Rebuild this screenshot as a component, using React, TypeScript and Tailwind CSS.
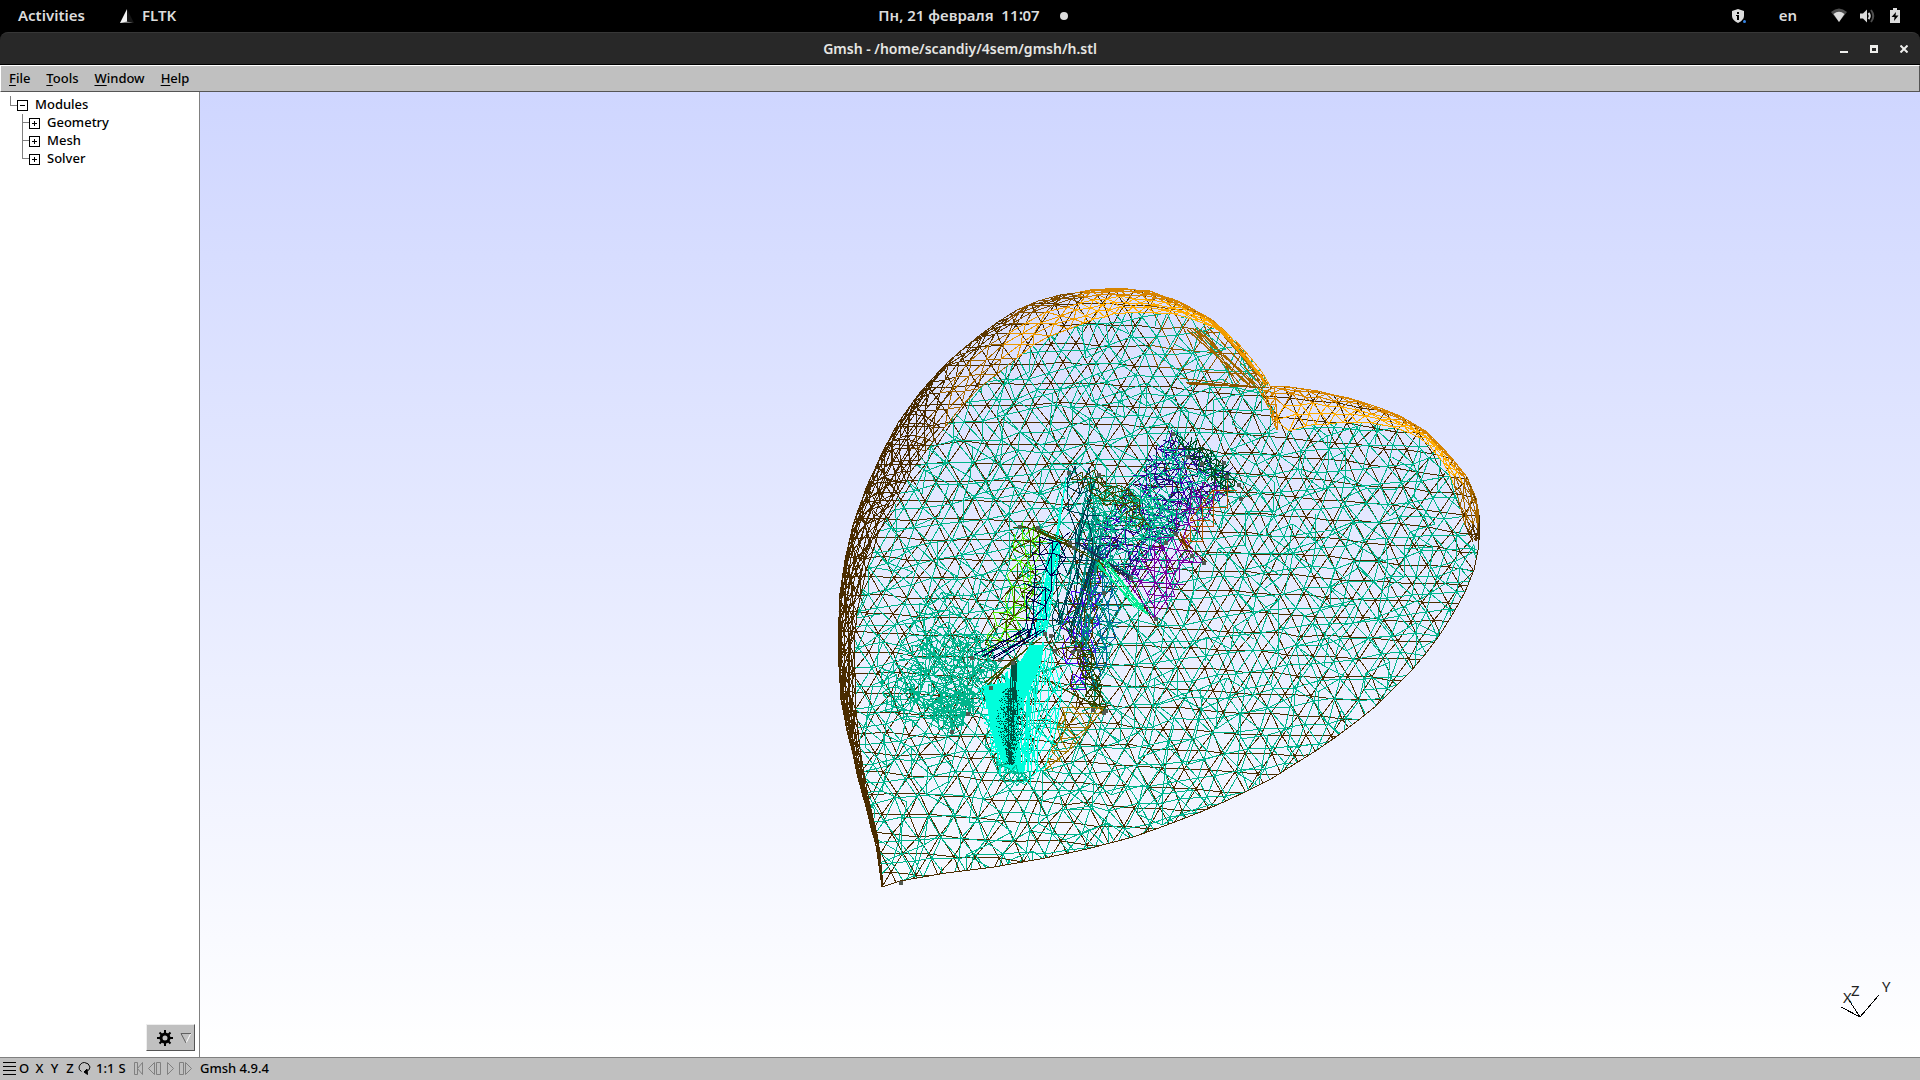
import React from "react";

type Pt = [number, number];
type Stroke = { color: string; d: string };

const random = (seed: number) => {
  let s = seed * 2654435761;
  return () => {
    s = (s + 0x6d2b79f5) | 0;
    let t = Math.imul(s ^ (s >>> 15), 1 | s);
    t = (t + Math.imul(t ^ (t >>> 7), 61 | t)) ^ t;
    return ((t ^ (t >>> 14)) >>> 0) / 4294967296;
  };
};

const inside = (poly: Pt[], x: number, y: number) => {
  let hit = false;
  for (let i = 0, j = poly.length - 1; i < poly.length; j = i++) {
    const [xi, yi] = poly[i];
    const [xj, yj] = poly[j];
    if (yi > y !== yj > y && x < ((xj - xi) * (y - yi)) / (yj - yi) + xi) hit = !hit;
  }
  return hit;
};

const points = (poly: Pt[]) => poly.map((p) => p.join(",")).join(" ");
const seg = (a: Pt, b: Pt) =>
  `M${Math.round(a[0])} ${Math.round(a[1])}L${Math.round(b[0])} ${Math.round(b[1])}`;

type LatticeOptions = {
  dx: number;
  dy: number;
  angle?: number;
  jitter?: number;
  seed?: number;
  density?: number;
  margin?: boolean;
  warp?: (x: number, y: number) => Pt;
  paint?: (x: number, y: number) => string;
};

/* Triangulated lattice over a polygon, grouped by stroke colour. */
const lattice = (poly: Pt[], color: string, o: LatticeOptions): Stroke[] => {
  const rnd = random(o.seed ?? 1);
  const xs = poly.map((p) => p[0]);
  const ys = poly.map((p) => p[1]);
  const cx = (Math.min(...xs) + Math.max(...xs)) / 2;
  const cy = (Math.min(...ys) + Math.max(...ys)) / 2;
  const r = Math.hypot(Math.max(...xs) - cx, Math.max(...ys) - cy) + 50;
  const a = ((o.angle ?? 0) * Math.PI) / 180;
  const jit = o.jitter ?? 2;
  const n = Math.ceil(r / o.dx);
  const m = Math.ceil(r / o.dy);
  const grid: Pt[][] = [];
  for (let j = -m; j <= m; j++) {
    const row: Pt[] = [];
    for (let i = -n; i <= n; i++) {
      const u = (i + (j & 1) / 2) * o.dx + (rnd() - 0.5) * jit * 2;
      const v = j * o.dy + (rnd() - 0.5) * jit * 2;
      let p: Pt = [cx + u * Math.cos(a) - v * Math.sin(a), cy + u * Math.sin(a) + v * Math.cos(a)];
      if (o.warp) p = o.warp(p[0], p[1]);
      row.push(p);
    }
    grid.push(row);
  }
  const groups: Record<string, string[]> = {};
  const add = (p: Pt, q?: Pt) => {
    if (!q) return;
    if (o.density !== undefined && rnd() > o.density) return;
    const mx = (p[0] + q[0]) / 2;
    const my = (p[1] + q[1]) / 2;
    const hit = o.margin ? inside(poly, p[0], p[1]) || inside(poly, q[0], q[1]) : inside(poly, mx, my);
    if (!hit) return;
    (groups[o.paint ? o.paint(mx, my) : color] ??= []).push(seg(p, q));
  };
  grid.forEach((row, j) => {
    const odd = (j - m) & 1;
    const next = grid[j + 1];
    row.forEach((p, i) => {
      add(p, row[i + 1]);
      if (next) {
        add(p, next[i + (odd ? 0 : -1)]);
        add(p, next[i + (odd ? 1 : 0)]);
      }
    });
  });
  return Object.entries(groups).map(([c, d]) => ({ color: c, d: d.join("") }));
};

/* Long thin strokes from one polyline to another, for stretched triangles. */
const fan = (from: Pt[], to: Pt[], color: string, count: number, seed: number): Stroke => {
  const rnd = random(seed);
  const at = (line: Pt[], t: number): Pt => {
    const f = t * (line.length - 1);
    const i = Math.min(line.length - 2, Math.floor(f));
    const k = f - i;
    return [line[i][0] + (line[i + 1][0] - line[i][0]) * k, line[i][1] + (line[i + 1][1] - line[i][1]) * k];
  };
  let d = "";
  for (let i = 0; i < count; i++) {
    const t = rnd();
    d += seg(at(from, t), at(to, Math.min(1, Math.max(0, t + (rnd() - 0.5) * 0.5))));
  }
  return { color, d };
};

/* Foreshortened surface between an outer silhouette and an inner curve. */
const band = (
  outer: Pt[],
  inner: Pt[],
  rows: number,
  step: number,
  seed: number,
  paint: (x: number, y: number, k: number) => string
): Stroke[] => {
  const rnd = random(seed);
  const groups: Record<string, string[]> = {};
  const rings: Pt[][] = Array.from({ length: rows + 1 }, () => []);
  for (let s = 0; s < outer.length - 1; s++) {
    const len = Math.hypot(outer[s + 1][0] - outer[s][0], outer[s + 1][1] - outer[s][1]);
    const n = Math.max(1, Math.round(len / step));
    for (let q = 0; q < n; q++) {
      for (let k = 0; k <= rows; k++) {
        const t = Math.min(1, (q + (k % 2) / 2) / n);
        const w = 1 - Math.cos(((k / rows) * Math.PI) / 2);
        const g = Math.min(1, Math.max(0, w + (k ? (rnd() - 0.5) * 0.08 : 0)));
        const ox = outer[s][0] + (outer[s + 1][0] - outer[s][0]) * t;
        const oy = outer[s][1] + (outer[s + 1][1] - outer[s][1]) * t;
        const ix = inner[s][0] + (inner[s + 1][0] - inner[s][0]) * t;
        const iy = inner[s][1] + (inner[s + 1][1] - inner[s][1]) * t;
        rings[k].push([ox + (ix - ox) * g, oy + (iy - oy) * g]);
      }
    }
  }
  const add = (p: Pt | undefined, q: Pt | undefined, k: number) => {
    if (!p || !q) return;
    (groups[paint((p[0] + q[0]) / 2, (p[1] + q[1]) / 2, k)] ??= []).push(seg(p, q));
  };
  rings.forEach((ring, k) =>
    ring.forEach((p, i) => {
      add(p, ring[i + 1], k);
      if (k < rows) {
        add(p, rings[k + 1][i], k);
        add(p, rings[k + 1][i + (k % 2 ? 1 : -1)], k);
      }
    })
  );
  return Object.entries(groups).map(([c, d]) => ({ color: c, d: d.join("") }));
};

const leftOuter: Pt[] = [
  [882, 887], [876, 845], [862, 793], [848, 735], [841, 700], [838, 650], [839, 600], [845, 560],
  [853, 525], [866, 488], [882, 453], [898, 423], [918, 395], [932, 379], [947, 363], [963, 349],
  [980, 335], [998, 322], [1017, 310], [1038, 301], [1060, 295], [1090, 290], [1120, 288],
  [1150, 291], [1180, 302], [1211, 319], [1235, 340],
];
const leftInner: Pt[] = [
  [883, 886], [879, 842], [867, 793], [859, 740], [855, 700], [854, 645], [858, 605], [870, 560],
  [882, 525], [898, 497], [909, 477], [922, 455], [937, 437], [952, 417], [970, 398], [987, 382],
  [1006, 365], [1027, 350], [1040, 342], [1060, 332], [1078, 325], [1100, 318], [1120, 313],
  [1145, 312], [1183, 315], [1220, 330], [1236, 341],
];
const lobe: Pt[] = [[1250, 357], [1262, 372], [1270, 386]];
const rightOuter: Pt[] = [
  [1270, 386], [1290, 387], [1318, 391], [1349, 398], [1380, 408], [1400, 416], [1427, 432],
  [1450, 456], [1467, 477], [1476, 498], [1479, 515], [1480, 530], [1478, 550],
];
const rightInner: Pt[] = [
  [1278, 435], [1300, 427], [1322, 424], [1350, 422], [1380, 424], [1405, 430], [1425, 440],
  [1440, 458], [1450, 475], [1458, 495], [1461, 515], [1468, 535], [1477, 550],
];
const lower: Pt[] = [
  [1474, 570], [1465, 592], [1454, 612], [1441, 633], [1427, 652], [1411, 671], [1394, 688],
  [1376, 706], [1356, 722], [1336, 737], [1314, 752], [1293, 765], [1271, 779], [1249, 790],
  [1226, 801], [1203, 811], [1180, 820], [1156, 829], [1133, 837], [1110, 843], [1087, 849],
  [1064, 854], [1040, 859], [1017, 863], [994, 867], [970, 870], [946, 873], [923, 877], [900, 881],
];

const heart: Pt[] = [...leftOuter, ...lobe, ...rightOuter, ...lower];
const front: Pt[] = [...leftInner, ...lobe, [1274, 410], ...rightInner, ...lower];

const BROWN = "#4a2c00";
const TEAL = "#00b58c";
const CYAN = "#00ffdc";

const leftPaint = (x: number, y: number, k: number) => {
  if (x < 945) return k > 4 && y < 450 ? "#6b4200" : BROWN;
  if (x < 1010) return k > 3 ? "#a56700" : "#5d3800";
  if (x < 1080) return k > 3 ? "#ec9800" : "#855000";
  return k > 3 ? "#ffac00" : "#d68400";
};
const rightPaint = (x: number, y: number, k: number) =>
  y > 525 ? "#5d3800" : y > 480 ? "#a56700" : k > 2 ? "#ffac00" : "#d68400";
const backPaint = (x: number, y: number) =>
  x > 1150 && y < 395 - (1270 - x) * 0.25 && x < 1275 ? "#8a5500" : BROWN;

const bend = (x: number, y: number): Pt => [
  x,
  y + ((0.28 * (x - 1150) ** 2) / 1000) * Math.max(0, (620 - y) / 300),
];
const arch = (x: number, y: number): Pt => [
  x + 3 * Math.sin(y / 23),
  y + 4 * Math.sin(x / 61 + y / 90) + ((0.15 * (x - 1150) ** 2) / 1000) * Math.max(0, (620 - y) / 300),
];

const shell: Stroke[] = [
  ...lattice(heart, BROWN, { dx: 24, dy: 20, angle: 3, jitter: 2, seed: 11, margin: true, warp: bend, paint: backPaint }),
  ...lattice(front, TEAL, { dx: 23, dy: 20, angle: -5, jitter: 4, seed: 5, margin: true, warp: arch }),
  ...lattice(front, TEAL, { dx: 27, dy: 23, angle: 38, jitter: 5, seed: 6, margin: true, density: 0.42 }),
];

const rims: Stroke[] = [
  ...band(leftOuter, leftInner, 7, 19, 3, leftPaint),
  ...band(leftOuter.slice(3, 14), leftInner.slice(3, 14).map(([x, y]): Pt => [x - 5, y]), 3, 24, 9, () => BROWN),
  fan([[1185, 330], [1205, 325], [1236, 342]], [[1240, 384], [1262, 388], [1268, 384]], "#a56700", 13, 4),
  fan([[1195, 308], [1222, 328]], [[1256, 366], [1268, 386]], "#f09a00", 8, 14),
  fan([[1180, 378], [1190, 385]], [[1262, 388], [1270, 388]], "#8a5500", 4, 15),
  { color: "#f09a00", d: "M1235 340L1250 357L1262 372L1270 386M1230 337L1247 357L1260 375L1266 388" },
  ...band(rightOuter, rightInner, 5, 18, 8, rightPaint),
  ...band([[1258, 388], [1270, 410], [1277, 434]], [[1274, 388], [1276, 404], [1279, 434]], 2, 8, 2, () => "#d68400"),
];

const tealWide: Pt[] = [[920, 600], [960, 590], [990, 640], [1000, 670], [978, 712], [952, 732], [920, 728], [885, 712], [880, 670], [900, 650]];
const tealFan: Pt[] = [[925, 640], [975, 630], [995, 665], [975, 712], [952, 732], [925, 718], [905, 690]];
const tealCore: Pt[] = [[925, 702], [978, 686], [970, 712], [952, 732]];
const cyanBody: Pt[] = [[983, 686], [1008, 682], [1030, 645], [1044, 645], [1038, 672], [1022, 705], [1014, 740], [1020, 772], [1004, 766], [993, 738]];
const cyanVeil: Pt[] = [[1046, 650], [1064, 690], [1056, 730], [1040, 785], [1018, 780], [1014, 740], [1022, 705]];
const green: Pt[] = [[1016, 525], [1038, 527], [1042, 560], [1020, 640], [980, 652], [1003, 600]];
const navy: Pt[] = [[1038, 540], [1066, 535], [1046, 622], [1030, 640], [1022, 610]];
const steel: Pt[] = [[1068, 474], [1098, 474], [1096, 540], [1072, 610], [1050, 640], [1060, 540]];
const violet: Pt[] = [[1072, 585], [1104, 560], [1092, 650], [1078, 708], [1058, 640]];
const indigo: Pt[] = [[1170, 434], [1226, 468], [1236, 488], [1200, 510], [1165, 545], [1128, 580], [1080, 545], [1120, 500], [1145, 465]];
const blue: Pt[] = [[1085, 540], [1115, 560], [1118, 620], [1095, 700], [1080, 650]];
const magenta: Pt[] = [[1150, 542], [1172, 532], [1200, 556], [1180, 572], [1176, 600], [1155, 612], [1126, 574]];
const plum: Pt[] = [[1180, 495], [1230, 480], [1212, 510], [1190, 535], [1172, 530]];
const gold: Pt[] = [[1064, 708], [1104, 709], [1078, 740], [1048, 768], [1054, 735]];
const darkStrip: Pt[] = [[1172, 432], [1210, 448], [1238, 482], [1228, 494], [1200, 470]];
const oliveTop: Pt[] = [[1064, 468], [1098, 472], [1135, 492], [1150, 530], [1110, 510]];
const oliveLow: Pt[] = [[1075, 635], [1095, 655], [1106, 712], [1088, 705]];
const tealBlob: Pt[] = [[1090, 480], [1150, 495], [1185, 515], [1165, 545], [1125, 530], [1085, 540]];

const organs: Stroke[] = [
  ...lattice(tealWide, TEAL, { dx: 9, dy: 8, angle: 18, jitter: 3, seed: 21, density: 0.6 }),
  ...lattice(tealFan, TEAL, { dx: 9, dy: 7, angle: -30, jitter: 3, seed: 22, density: 0.7 }),
  ...lattice(tealCore, TEAL, { dx: 5, dy: 4, angle: -30, jitter: 2, seed: 23, density: 0.8 }),
  fan([[880, 712], [905, 660], [935, 620]], [[952, 732], [972, 705], [990, 660]], TEAL, 10, 20),
  ...lattice(indigo, "#3800b0", { dx: 12, dy: 10, angle: 12, jitter: 4, seed: 24, density: 0.75 }),
  ...lattice(indigo, "#1c1060", { dx: 13, dy: 10, angle: -35, jitter: 4, seed: 25, density: 0.5 }),
  ...lattice(tealBlob, TEAL, { dx: 7, dy: 6, angle: 25, jitter: 3, seed: 26, density: 0.8 }),
  ...lattice(indigo, TEAL, { dx: 12, dy: 10, angle: 40, jitter: 4, seed: 27, density: 0.6 }),
  ...lattice(magenta, "#7800a0", { dx: 14, dy: 12, angle: 3, jitter: 2, seed: 28 }),
  { color: "#7800a0", d: "M1122 574L1154 618L1166 601L1179 580V562L1203 562L1180 534M1154 618V545M1166 601V552" },
  ...lattice(plum, "#7800a0", { dx: 13, dy: 11, angle: -20, jitter: 3, seed: 29, density: 0.8 }),
  ...lattice(blue, "#0060a0", { dx: 11, dy: 14, angle: 8, jitter: 3, seed: 30, density: 0.8 }),
  ...lattice(blue, "#008c80", { dx: 10, dy: 16, angle: 14, jitter: 4, seed: 31, density: 0.7 }),
  ...lattice(violet, "#5000f0", { dx: 10, dy: 14, angle: 8, jitter: 3, seed: 32, density: 0.8 }),
  ...lattice(violet, "#503800", { dx: 10, dy: 12, angle: -10, jitter: 3, seed: 33, density: 0.6 }),
  fan([[1088, 480], [1104, 540]], [[1058, 640], [1090, 650]], "#008c80", 10, 51),
  ...lattice(steel, "#003c50", { dx: 10, dy: 22, angle: 8, jitter: 4, seed: 34, density: 0.8 }),
  ...lattice(green, "#50f000", { dx: 12, dy: 13, angle: 14, jitter: 3, seed: 35, density: 0.85 }),
  ...lattice(green, "#404800", { dx: 14, dy: 12, angle: 20, jitter: 4, seed: 36, density: 0.5 }),
  fan([[1056, 530], [1067, 474]], [[1044, 640], [1054, 560]], CYAN, 10, 37),
  fan([[1050, 545], [1062, 535]], [[1030, 638], [1046, 635]], CYAN, 18, 38),
  ...lattice(navy, "#000050", { dx: 10, dy: 16, angle: 14, jitter: 4, seed: 39, density: 0.85 }),
  fan([[972, 655], [1000, 660]], [[1022, 628], [1046, 630]], "#000050", 6, 40),
  fan([[1084, 545], [1100, 545]], [[1052, 620], [1075, 640]], "#003c50", 6, 41),
  ...lattice(darkStrip, "#004c20", { dx: 7, dy: 6, angle: 38, jitter: 2, seed: 42 }),
  ...lattice(oliveTop, "#404800", { dx: 9, dy: 6, angle: 24, jitter: 3, seed: 43, density: 0.6 }),
  ...lattice(oliveLow, "#304000", { dx: 7, dy: 6, angle: 60, jitter: 3, seed: 44 }),
  fan([[1020, 526], [1038, 528]], [[1066, 540], [1128, 578]], "#404800", 3, 45),
  fan([[1038, 528], [1038, 532]], [[1070, 540], [1073, 548]], "#404800", 3, 53),
  fan([[1072, 545], [1080, 538]], [[1126, 580], [1132, 574]], "#1c3050", 4, 46),
  fan([[1090, 568], [1112, 552]], [[1132, 606], [1154, 618]], "#00f090", 7, 47),
  fan([[975, 700], [985, 682]], [[1018, 655], [1046, 634]], "#405000", 4, 48),
  fan([[1010, 660], [1016, 664]], [[1095, 706], [1106, 711]], "#404800", 4, 49),
  ...lattice(gold, "#a07800", { dx: 15, dy: 12, angle: 5, jitter: 3, seed: 50 }),
  { color: "#a07800", d: "M1062 707H1104L1075 745L1045 770L1056 730L1066 718L1062 707" },
  { color: "#b05000", d: "M1213 490H1237M1227 480V509M1213 490V526H1190V542M1213 490L1190 520M1202 506V541H1189M1201 507H1227M1190 520H1210M1180 532L1188 548M1185 532L1190 546M1176 534L1188 550M1184 540L1191 532" },
  ...lattice(cyanVeil, CYAN, { dx: 9, dy: 17, angle: 10, jitter: 4, seed: 52, density: 0.5 }),
  { color: CYAN, d: "M1050 650L1062 690L1056 730L1045 768M1046 650L1040 700L1032 760L1030 785M1052 655L1046 720L1030 765M1040 665L1060 700L1036 730L1056 745" },
  { color: "#503000", d: "M1172 532L1207 562M1180 534L1191 556M1238 484L1252 500M1046 640L1058 655M1050 636L1060 655" },
];

const nodes: Pt[] = [
  [1172, 433], [1187, 456], [1201, 463], [1223, 462], [1238, 484], [1240, 498], [1226, 476],
  [1191, 555], [1203, 562], [1165, 542], [1175, 533], [1155, 618], [1130, 577], [1068, 472],
  [1098, 474], [1019, 526], [1037, 527], [1073, 547], [1069, 542], [1103, 592], [1044, 633],
  [1050, 635], [1054, 650], [1078, 650], [1072, 651], [1012, 662], [999, 659], [971, 657],
  [990, 687], [967, 713], [951, 731], [1105, 710], [1092, 709], [1103, 712], [900, 882],
];

function Strokes({ items }: { items: Stroke[] }) {
  return (
    <>
      {items.map((s, i) => (
        <path key={i} d={s.d} stroke={s.color} />
      ))}
    </>
  );
}

function Viewport() {
  const rnd = random(77);
  const specks = Array.from({ length: 900 }, () => {
    const t = rnd();
    const w = 5 + 11 * Math.sin(Math.PI * Math.min(1, t * 1.1 + 0.05));
    return `M${Math.round(1010 + (rnd() + rnd() - 1) * w)} ${Math.round(688 + t * 76)}h1`;
  }).join("");
  return (
    <svg
      viewBox="200 92 1720 965"
      className="h-full w-full"
      fill="none"
      shapeRendering="crispEdges"
      role="img"
      aria-label="Heart surface mesh"
    >
      <clipPath id="heart">
        <polygon points={points(heart)} />
      </clipPath>
      <clipPath id="front">
        <polygon points={points(front)} />
      </clipPath>
      <g clipPath="url(#heart)">
        <Strokes items={shell.filter((s) => s.color !== TEAL)} />
      </g>
      <g clipPath="url(#front)">
        <Strokes items={shell.filter((s) => s.color === TEAL)} />
      </g>
      <Strokes items={rims} />
      <polyline points={points([...rightOuter.slice(10), ...lower, leftOuter[0]])} stroke={BROWN} />
      <Strokes items={organs} />
      <polygon points={points(cyanBody)} fill={CYAN} />
      <Strokes
        items={[
          fan([[984, 690], [1046, 640]], [[1000, 775], [1034, 770]], CYAN, 30, 61),
          ...lattice([[990, 755], [1010, 765], [1036, 778], [1020, 785], [1000, 780]], TEAL, { dx: 6, dy: 5, angle: 20, jitter: 2, seed: 62, density: 0.7 }),
          ...lattice([[978, 690], [992, 685], [1000, 765], [990, 750]], CYAN, { dx: 5, dy: 5, angle: 10, jitter: 2, seed: 63, density: 0.8 }),
          { color: "#005040", d: specks + "M1014 660V700L1011 735M1012 665L1010 690V715M1016 662L1013 700V740M1008 690V755M1016 690L1018 715" },
          fan([[1010, 662], [1018, 664]], [[1008, 700], [1016, 700]], "#005040", 4, 64),
        ]}
      />
      {nodes.map(([x, y], i) => (
        <rect key={i} x={x - 1} y={y - 1} width="4" height="4" fill="#505850" />
      ))}
      <path d="M1860 1017L1841 1007M1860 1017L1849 1000M1860 1017L1879 995" stroke="#000" />
      <g fill="#222" fontFamily="Noto Sans, sans-serif" fontSize="15">
        <text x="1843" y="1003">X</text>
        <text x="1851" y="996">Z</text>
        <text x="1882" y="992">Y</text>
      </g>
    </svg>
  );
}

function TopBar() {
  return (
    <header className="grid h-8 grid-cols-[1fr_auto_1fr] items-center bg-black pb-px text-[15px] font-semibold text-[#dcdcdc]">
      <div className="flex items-center pl-[18px]">
        <button className="w-[102px] text-left">Activities</button>
        <button className="flex items-center gap-2">
          <svg width="14" height="14" viewBox="0 0 14 14" aria-hidden="true">
            <path d="M7 0V14H0z" fill="#f4f4f4" />
            <path d="M7 0L14 14H7z" fill="#151515" />
            <path d="M0 14L7 12.500L13 14z" fill="#777" />
          </svg>
          FLTK
        </button>
      </div>
      <button className="flex items-center gap-5 pl-[26px]">
        <span className="whitespace-pre">Пн, 21 февраля  11∶07</span>
        <span className="size-2 rounded-full bg-[#dcdcdc]" />
      </button>
      <div className="flex items-center justify-end pr-5">
        <svg className="mr-8" width="15" height="16" viewBox="0 0 15 16" aria-hidden="true">
          <path d="M6 1L12 3V8Q12 12 6 15Q0 12 0 8V3z" fill="#dcdcdc" />
          <path d="M5 4h2v2H5zM4 7h3v5H5V8H4z" fill="#000" />
          <circle cx="12.500" cy="13.500" r="2.500" fill="#000" />
          <circle cx="12.500" cy="13.500" r="1.500" fill="#3584e4" />
        </svg>
        <button className="mr-[34px]">en</button>
        <button className="flex items-center gap-3" aria-label="System menu">
          <svg width="16" height="15" viewBox="0 0 16 15" aria-hidden="true">
            <path d="M0 4Q8 -3 16 4L8 14z" fill="#4d4d4d" />
            <path d="M2.500 6Q8 1.500 13.500 6L8 14z" fill="#dcdcdc" />
          </svg>
          <svg width="16" height="16" viewBox="0 0 16 16" fill="none" aria-hidden="true">
            <path d="M1 5.500h3L8 1.500v13L4 10.500H1z" fill="#dcdcdc" />
            <path d="M9.500 5Q12 8 9.500 11" stroke="#dcdcdc" strokeWidth="2" />
            <path d="M12 2Q16.500 8 12 14" stroke="#4d4d4d" strokeWidth="2" />
          </svg>
          <svg className="ml-[3px]" width="10" height="15" viewBox="0 0 10 15" aria-hidden="true">
            <path d="M3 0h4v2h3v13H0V2h3z" fill="#dcdcdc" />
            <path d="M6 4L1.500 9H4.500L4 13L8.500 7.500H5.500z" fill="#000" />
          </svg>
        </button>
      </div>
    </header>
  );
}

function TitleBar() {
  return (
    <div className="bg-black">
      <div className="grid h-8 grid-cols-[1fr_auto_1fr] items-center rounded-t-lg border-t border-[#373737] bg-[#282828]">
        <h1 className="col-start-2 text-sm font-semibold text-[#e6e6e3]">Gmsh - /home/scandiy/4sem/gmsh/h.stl</h1>
        <div className="flex justify-end gap-[22px] pr-3 text-[#eeeeec]">
          <button aria-label="Minimize">
            <svg width="8" height="8" viewBox="0 0 8 8" shapeRendering="crispEdges" aria-hidden="true"><path d="M0 6h8v2H0z" fill="currentColor" /></svg>
          </button>
          <button aria-label="Maximize">
            <svg width="8" height="8" viewBox="0 0 8 8" shapeRendering="crispEdges" aria-hidden="true"><path fillRule="evenodd" d="M0 0h8v8H0zM2 3h4v3H2z" fill="currentColor" /></svg>
          </button>
          <button aria-label="Close">
            <svg width="8" height="8" viewBox="0 0 8 8" aria-hidden="true"><path d="M0.500 0.500l7 7M7.500 0.500l-7 7" stroke="currentColor" strokeWidth="2" /></svg>
          </button>
        </div>
      </div>
      <div className="h-px" />
    </div>
  );
}

function MenuBar() {
  const menus = ["File", "Tools", "Window", "Help"];
  return (
    <nav className="flex h-[27px] items-center gap-4 border border-t-white border-r-[#555] border-b-[#555] border-l-white bg-[#c0c0c0] pl-2 text-[13px] font-medium">
      {menus.map((m) => (
        <button key={m}>
          <span className="underline decoration-1 underline-offset-2">{m[0]}</span>
          {m.slice(1)}
        </button>
      ))}
    </nav>
  );
}

function Toggle({ open }: { open?: boolean }) {
  return (
    <svg width="11" height="11" viewBox="0 0 11 11" fill="none" shapeRendering="crispEdges" aria-hidden="true">
      <path d="M0 0h11v11h-11z" fill="#000" />
      <path d="M1 1h9v9h-9z" fill="#fff" />
      <path d={open ? "M3 5h5v1h-5z" : "M3 5h5v1h-5zM5 3h1v5h-1z"} fill="#000" />
    </svg>
  );
}

function ModuleTree() {
  const modules = ["Geometry", "Mesh", "Solver"];
  return (
    <ul className="pt-1 pl-2.5 text-[13px] font-medium">
      <li>
        <button className="flex h-[18px] items-center">
          <span className="mb-2 h-2.5 w-[7px] border-b border-l border-[#808080]" />
          <Toggle open />
          <span className="ml-[7px]">Modules</span>
        </button>
        <ul className="pl-3">
          {modules.map((m, i) => (
            <li key={m} className="flex">
              <span className="flex w-[7px] flex-col">
                <span className="h-[9px] border-b border-l border-[#808080]" />
                {i < modules.length - 1 && <span className="flex-1 border-l border-[#808080]" />}
              </span>
              <button className="flex h-[18px] items-center">
                <Toggle />
                <span className="ml-[7px]">{m}</span>
              </button>
            </li>
          ))}
        </ul>
      </li>
    </ul>
  );
}

function Sidebar() {
  return (
    <aside className="flex w-[200px] shrink-0 flex-col justify-between border-r border-[#808080] bg-white">
      <ModuleTree />
      <button
        aria-label="Options"
        className="mb-1.5 mr-1 flex h-[27px] w-[49px] items-center justify-between self-end border border-t-[#eee] border-r-[#555] border-b-[#555] border-l-[#eee] bg-[#c0c0c0] pl-2.5 pr-0.5"
      >
        <svg width="16" height="16" viewBox="0 0 16 16" fill="none" aria-hidden="true">
          <path d="M8 0v16M0 8h16M2.500 2.500l11 11M13.500 2.500l-11 11" stroke="#000" strokeWidth="2" />
          <circle cx="8" cy="8" r="4" fill="#c0c0c0" stroke="#000" strokeWidth="3" />
        </svg>
        <svg width="12" height="12" viewBox="0 0 12 12" fill="none" aria-hidden="true">
          <path d="M11 1L6 11" stroke="#fff" />
          <path d="M11 1.500H1L6 11" stroke="#606060" />
        </svg>
      </button>
    </aside>
  );
}

function StatusBar() {
  const players: [string, string, number][] = [
    ["Rewind", "M1.500 0.500h3v12h-3zM9.500 0.500v12L4.500 6.500z", 11],
    ["Step back", "M6.500 0.500v12L0.500 6.500zM8.500 0.500h4v12h-4z", 14],
    ["Play", "M1.500 0.500v12L7.500 6.500z", 9],
    ["Step forward", "M0.500 0.500h4v12h-4zM6.500 0.500v12L12.500 6.500z", 14],
  ];
  return (
    <footer className="flex h-[23px] items-center border-t border-[#808080] bg-[#c0c0c0] pb-px pl-[3px] text-[13px] font-medium">
      <button aria-label="Menu">
        <svg width="13" height="14" viewBox="0 0 13 14" shapeRendering="crispEdges" aria-hidden="true">
          <path d="M0 0h13v1h-13zM0 4h13v1h-13zM0 8h13v1h-13zM0 12h13v1h-13z" fill="#000" />
        </svg>
      </button>
      <button className="w-4">O</button>
      <button className="w-[15px]">X</button>
      <button className="w-[15px]">Y</button>
      <button className="w-4">Z</button>
      <button aria-label="Rotate">
        <svg width="13" height="13" viewBox="0 0 13 13" fill="none" stroke="#000" aria-hidden="true">
          <path d="M3.500 9.500Q0.500 8 1 5Q2.500 0.500 6.500 0.500Q11 1 12 5Q12 8.500 7.500 10" />
          <path d="M9 7L6 10L9.500 12.500z" fill="#000" />
        </svg>
      </button>
      <button className="ml-[5px] w-[18px]">1:1</button>
      <button className="ml-[3px] w-2.5">S</button>
      <div className="ml-1.5 flex gap-1">
        {players.map(([label, d, w]) => (
          <button key={label} aria-label={label} disabled>
            <svg width={w} height="13" viewBox={`0 0 ${w} 13`} fill="none" stroke="#808080" aria-hidden="true">
              <path d={d} />
            </svg>
          </button>
        ))}
      </div>
      <span className="ml-[7px]">Gmsh 4.9.4</span>
    </footer>
  );
}

export default function App() {
  return (
    <div className="flex h-screen flex-col overflow-hidden bg-black font-['Noto_Sans','Open_Sans',sans-serif] text-black">
      <TopBar />
      <TitleBar />
      <MenuBar />
      <div className="flex min-h-0 flex-1">
        <Sidebar />
        <main className="min-w-0 flex-1 bg-linear-to-b from-[#cfd6ff] to-white">
          <Viewport />
        </main>
      </div>
      <StatusBar />
    </div>
  );
}
